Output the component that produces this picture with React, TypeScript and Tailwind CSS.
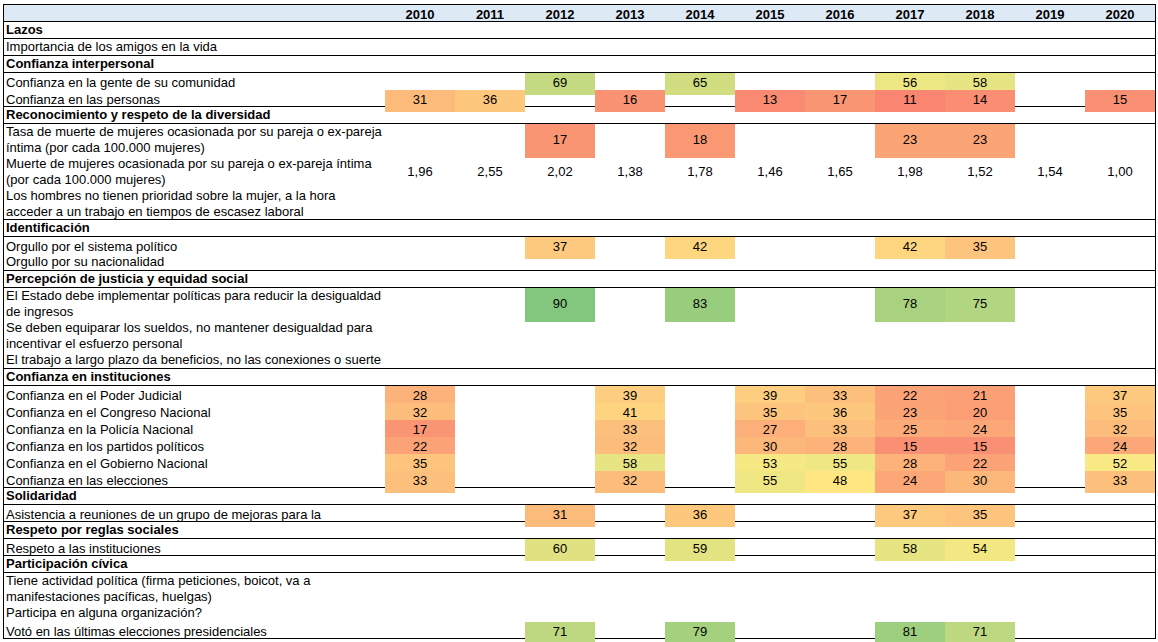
import React from "react";

type Val = number | string | null;

interface Row {
  label: string[];
  cat?: boolean;
  vals?: Val[];
  plain?: boolean;
  tall?: boolean;
  end?: boolean;
}

const years = [2010, 2011, 2012, 2013, 2014, 2015, 2016, 2017, 2018, 2019, 2020];
const _ = null;

const rows: Row[] = [
  { label: ["Lazos"], cat: true },
  { label: ["Importancia de los amigos en la vida"], end: true },
  { label: ["Confianza interpersonal"], cat: true },
  { label: ["Confianza en la gente de su comunidad"], vals: [_, _, 69, _, 65, _, _, 56, 58, _, _] },
  { label: ["Confianza en las personas"], vals: [31, 36, _, 16, _, 13, 17, 11, 14, _, 15], end: true },
  { label: ["Reconocimiento y respeto de la diversidad"], cat: true },
  {
    label: ["Tasa de muerte de mujeres ocasionada por su pareja o ex-pareja", "íntima (por cada 100.000 mujeres)"],
    vals: [_, _, 17, _, 18, _, _, 23, 23, _, _],
    tall: true,
  },
  {
    label: ["Muerte de mujeres ocasionada por su pareja o ex-pareja íntima", "(por cada 100.000 mujeres)"],
    vals: ["1,96", "2,55", "2,02", "1,38", "1,78", "1,46", "1,65", "1,98", "1,52", "1,54", "1,00"],
    plain: true,
    tall: true,
  },
  {
    label: ["Los hombres no tienen prioridad sobre la mujer, a la hora", "acceder a un trabajo en tiempos de escasez laboral"],
    tall: true,
    end: true,
  },
  { label: ["Identificación"], cat: true },
  { label: ["Orgullo por el sistema político"], vals: [_, _, 37, _, 42, _, _, 42, 35, _, _] },
  { label: ["Orgullo por su nacionalidad"], end: true },
  { label: ["Percepción de justicia y equidad social"], cat: true },
  {
    label: ["El Estado debe implementar políticas para reducir la desigualdad", "de ingresos"],
    vals: [_, _, 90, _, 83, _, _, 78, 75, _, _],
    tall: true,
  },
  {
    label: ["Se deben equiparar los sueldos, no mantener desigualdad para", "incentivar el esfuerzo personal"],
    tall: true,
  },
  { label: ["El trabajo a largo plazo da beneficios, no las conexiones o suerte"], end: true },
  { label: ["Confianza en instituciones"], cat: true },
  { label: ["Confianza en el Poder Judicial"], vals: [28, _, _, 39, _, 39, 33, 22, 21, _, 37] },
  { label: ["Confianza en el Congreso Nacional"], vals: [32, _, _, 41, _, 35, 36, 23, 20, _, 35] },
  { label: ["Confianza en la Policía Nacional"], vals: [17, _, _, 33, _, 27, 33, 25, 24, _, 32] },
  { label: ["Confianza en los partidos políticos"], vals: [22, _, _, 32, _, 30, 28, 15, 15, _, 24] },
  { label: ["Confianza en el Gobierno Nacional"], vals: [35, _, _, 58, _, 53, 55, 28, 22, _, 52] },
  { label: ["Confianza en las elecciones"], vals: [33, _, _, 32, _, 55, 48, 24, 30, _, 33], end: true },
  { label: ["Solidaridad"], cat: true },
  { label: ["Asistencia a reuniones de un grupo de mejoras para la"], vals: [_, _, 31, _, 36, _, _, 37, 35, _, _], end: true },
  { label: ["Respeto por reglas sociales"], cat: true },
  { label: ["Respeto a las instituciones"], vals: [_, _, 60, _, 59, _, _, 58, 54, _, _], end: true },
  { label: ["Participación cívica"], cat: true },
  {
    label: ["Tiene actividad política (firma peticiones, boicot, va a", "manifestaciones pacíficas, huelgas)"],
    tall: true,
  },
  { label: ["Participa en alguna organización?"] },
  { label: ["Votó en las últimas elecciones presidenciales"], vals: [_, _, 71, _, 79, _, _, 81, 71, _, _], end: true },
];

// excel style 3-colour scale, 0 = red, 50 = yellow, 100 = green
const heat = (v: number) => {
  const red = [248, 105, 107];
  const yellow = [255, 235, 132];
  const green = [99, 190, 123];
  const [a, b, t] = v <= 50 ? [red, yellow, v / 50] : [yellow, green, (v - 50) / 50];
  const c = a.map((x, i) => Math.round(x + (b[i] - x) * t));
  return `rgb(${c[0]}, ${c[1]}, ${c[2]})`;
};

const TableRow = ({ row }: { row: Row }) => (
  <div
    className={`grid grid-cols-[381px_repeat(11,70px)] ${row.tall ? "h-[32px]" : "h-[17px]"} ${
      row.cat || row.end ? "border-b border-black" : ""
    }`}
  >
    <div
      className={`flex flex-col justify-center pl-[2px] pb-[2px] leading-[16px] whitespace-nowrap ${
        row.cat ? "font-bold" : ""
      }`}
    >
      {row.label.map((l) => (
        <span key={l}>{l}</span>
      ))}
    </div>
    {years.map((y, i) => {
      const v = row.vals ? row.vals[i] : null;
      return (
        <div
          key={y}
          className="flex items-center justify-center pb-[2px]"
          style={v !== null && !row.plain && typeof v === "number" ? { backgroundColor: heat(v) } : undefined}
        >
          {v}
        </div>
      );
    })}
  </div>
);

export default function App() {
  return (
    <div className="w-[1158px] h-[642px] bg-white pt-[4px] pl-[3px] text-[13px] text-black font-['Liberation_Sans',Arial,sans-serif]">
      <div className="w-[1153px] border-t border-l border-r border-black">
        <div className="grid grid-cols-[381px_repeat(11,70px)] h-[17px] bg-[#dde9f5] border-b border-black font-bold">
          <div />
          {years.map((y) => (
            <div key={y} className="flex items-center justify-center pb-[2px]">
              {y}
            </div>
          ))}
        </div>
        {rows.map((r, i) => (
          <TableRow key={i} row={r} />
        ))}
      </div>
    </div>
  );
}
